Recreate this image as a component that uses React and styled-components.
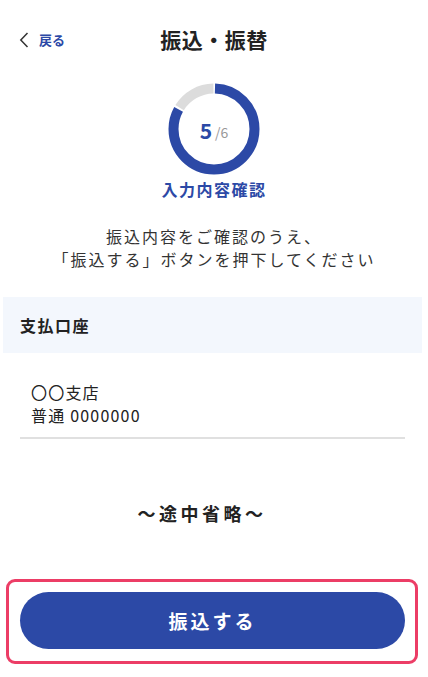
import React from "react";
import styled, { createGlobalStyle } from "styled-components";

const Global = createGlobalStyle`
  html, body { margin: 0; padding: 0; background: #fff; }
  body { font-family: "Noto Sans CJK JP", "Noto Sans", sans-serif; color: #222; }
`;

const BLUE = "#2c49a6";

const Page = styled.div`
  width: 428px;
  min-height: 677px;
  display: flex;
  flex-direction: column;
  align-items: stretch;
`;

const Header = styled.header`
  position: relative;
  height: 78px;
  display: flex;
  align-items: center;
  justify-content: center;
`;

const Back = styled.button`
  position: absolute;
  left: 19px;
  top: 30px;
  display: flex;
  align-items: center;
  gap: 10px;
  border: 0;
  background: none;
  padding: 0;
  font-family: inherit;
  font-size: 13px;
  font-weight: 700;
  color: ${BLUE};
`;

const Title = styled.h1`
  margin: 0;
  font-size: 21px;
  font-weight: 700;
  letter-spacing: 0.5px;
  color: #222;
`;

const Progress = styled.div`
  display: flex;
  flex-direction: column;
  align-items: center;
  margin-top: 5px;
`;

const RingWrap = styled.div`
  position: relative;
  width: 92px;
  height: 92px;
`;

const RingText = styled.div`
  position: absolute;
  inset: 0;
  display: flex;
  align-items: center;
  justify-content: center;
  gap: 3px;
  padding-top: 2px;
`;

const Step = styled.span`
  font-size: 21px;
  font-weight: 700;
  color: ${BLUE};
`;

const Total = styled.span`
  font-size: 14px;
  color: #999;
  margin-top: 4px;
`;

const StepLabel = styled.div`
  margin-top: 3px;
  font-size: 16px;
  font-weight: 700;
  letter-spacing: 1.5px;
  line-height: 22px;
  color: ${BLUE};
`;

const Description = styled.p`
  margin: 25px 0 0;
  text-align: center;
  font-size: 16px;
  letter-spacing: 2px;
  line-height: 23px;
  color: #333;
`;

const SectionHead = styled.div`
  margin: 26px 6px 0 3px;
  height: 56px;
  background: #f3f7fd;
  display: flex;
  align-items: center;
  padding-left: 17px;
  font-size: 16px;
  font-weight: 700;
  letter-spacing: 1.5px;
  color: #222;
`;

const Account = styled.div`
  margin: 28px 23px 0 20px;
  padding: 0 0 10px 11px;
  border-bottom: 2px solid #e0e0e0;
  font-size: 16px;
  letter-spacing: 1.2px;
  line-height: 23px;
  color: #222;
`;

const Omitted = styled.div`
  margin-top: 62px;
  padding-right: 24px;
  text-align: center;
  font-size: 18px;
  font-weight: 700;
  letter-spacing: 3.5px;
  line-height: 24px;
  color: #222;
`;

const Highlight = styled.div`
  margin: 54px 10px 0 6px;
  border: 3px solid #ec3d66;
  border-radius: 9px;
  padding: 10px 10px 12px 11px;
`;

const PrimaryButton = styled.button`
  width: 100%;
  height: 57px;
  border: 0;
  border-radius: 29px;
  background: ${BLUE};
  color: #fff;
  font-family: inherit;
  font-size: 19px;
  font-weight: 700;
  letter-spacing: 3px;
  display: flex;
  align-items: center;
  justify-content: center;
`;

function Ring({ step, total }) {
  const r = 40.5;
  const c = 2 * Math.PI * r;
  const gap = 2;
  const blueLen = (c * step) / total - gap;
  const grayLen = c / total - gap;
  return (
    <svg width="92" height="92" viewBox="0 0 92 92">
      <g transform="rotate(-90 46 46)">
        <circle
          cx="46"
          cy="46"
          r={r}
          fill="none"
          stroke={BLUE}
          strokeWidth="10"
          strokeDasharray={`${blueLen} ${c}`}
          strokeDashoffset={-1}
        />
        <circle
          cx="46"
          cy="46"
          r={r}
          fill="none"
          stroke="#dcdcdc"
          strokeWidth="10"
          strokeDasharray={`${grayLen} ${c}`}
          strokeDashoffset={-(blueLen + gap + 1)}
        />
      </g>
    </svg>
  );
}

export default function App() {
  return (
    <Page>
      <Global />
      <Header>
        <Back>
          <svg width="10" height="16" viewBox="0 0 10 16">
            <path d="M8.5 1 L1.8 8 L8.5 15" fill="none" stroke="#333" strokeWidth="1.5" />
          </svg>
          戻る
        </Back>
        <Title>振込・振替</Title>
      </Header>
      <Progress>
        <RingWrap>
          <Ring step={5} total={6} />
          <RingText>
            <Step>5</Step>
            <Total>/6</Total>
          </RingText>
        </RingWrap>
        <StepLabel>入力内容確認</StepLabel>
      </Progress>
      <Description>
        振込内容をご確認のうえ、
        <br />
        「振込する」ボタンを押下してください
      </Description>
      <SectionHead>支払口座</SectionHead>
      <Account>
        〇〇支店
        <br />
        普通 0000000
      </Account>
      <Omitted>～途中省略～</Omitted>
      <Highlight>
        <PrimaryButton>振込する</PrimaryButton>
      </Highlight>
    </Page>
  );
}
